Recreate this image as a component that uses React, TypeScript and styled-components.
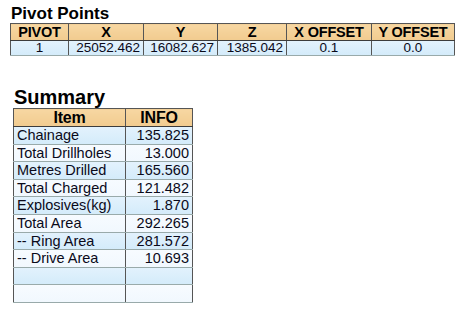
import React, { FC } from 'react';
import styled, { createGlobalStyle } from 'styled-components';

const GlobalStyle = createGlobalStyle`
  body {
    margin: 0;
    background: #ffffff;
    font-family: 'Liberation Sans', Arial, sans-serif;
    color: #000;
  }
`;

const Page = styled.div`
  width: 459px;
  height: 317px;
  padding: 4px 0 0 10px;
  box-sizing: border-box;
  display: flex;
  flex-direction: column;
`;

const Section = styled.section<{ $indent?: number; $gap?: number }>`
  margin-left: ${(p) => p.$indent ?? 0}px;
  margin-top: ${(p) => p.$gap ?? 0}px;
`;

const Title = styled.h2<{ $size: number; $h: number }>`
  margin: 0 0 0 1px;
  font-size: ${(p) => p.$size}px;
  font-weight: bold;
  line-height: ${(p) => p.$h}px;
  height: ${(p) => p.$h}px;
  white-space: nowrap;
`;

const Grid = styled.table`
  border-collapse: collapse;
  table-layout: fixed;
  border: 1px solid #3c3c3c;
`;

const HeadCell = styled.th<{ $w: number; $size: number; $h: number }>`
  width: ${(p) => p.$w}px;
  height: ${(p) => p.$h}px;
  padding: 0 2px;
  border: 1px solid #555;
  border-bottom-color: #3c3c3c;
  background: linear-gradient(#f7d7a2, #f1cb8f);
  font-weight: bold;
  font-size: ${(p) => p.$size}px;
  line-height: ${(p) => p.$h}px;
  text-align: center;
  white-space: nowrap;
  letter-spacing: -0.2px;
`;

const Row = styled.tr<{ $alt?: boolean }>`
  background: ${(p) =>
    p.$alt
      ? 'linear-gradient(#f7fbff, #f1f8fe)'
      : 'linear-gradient(#e3f2fd, #d3ebfa)'};
`;

const Cell = styled.td<{ $align?: 'left' | 'right' | 'center'; $h: number; $size: number }>`
  height: ${(p) => p.$h}px;
  padding: 0 3px;
  border: 1px solid #555;
  border-top-color: #9aa;
  border-bottom-color: #9aa;
  text-align: ${(p) => p.$align ?? 'left'};
  font-size: ${(p) => p.$size}px;
  line-height: ${(p) => p.$h}px;
  white-space: nowrap;
  color: #0a0a1a;
`;

const pivotCols = [
  { name: 'PIVOT', w: 53 },
  { name: 'X', w: 70 },
  { name: 'Y', w: 69 },
  { name: 'Z', w: 64 },
  { name: 'X OFFSET', w: 80 },
  { name: 'Y OFFSET', w: 78 },
];

const pivotRow = ['1', '25052.462', '16082.627', '1385.042', '0.1', '0.0'];
const pivotAlign: ('center' | 'right')[] = ['center', 'right', 'right', 'right', 'center', 'center'];

const summary: [string, string][] = [
  ['Chainage', '135.825'],
  ['Total Drillholes', '13.000'],
  ['Metres Drilled', '165.560'],
  ['Total Charged', '121.482'],
  ['Explosives(kg)', '1.870'],
  ['Total Area', '292.265'],
  ['-- Ring Area', '281.572'],
  ['-- Drive Area', '10.693'],
  ['', ''],
  ['', ''],
];

const App: FC = () => (
  <>
    <GlobalStyle />
    <Page>
      <Section>
        <Title $size={17} $h={19}>Pivot Points</Title>
        <Grid>
          <thead>
            <tr>
              {pivotCols.map((c) => (
                <HeadCell key={c.name} $w={c.w} $size={14.5} $h={16}>
                  {c.name}
                </HeadCell>
              ))}
            </tr>
          </thead>
          <tbody>
            <Row>
              {pivotRow.map((v, i) => (
                <Cell key={i} $h={14} $size={13.5} $align={pivotAlign[i]}>
                  {v}
                </Cell>
              ))}
            </Row>
          </tbody>
        </Grid>
      </Section>

      <Section $indent={3} $gap={31}>
        <Title $size={20} $h={21}>Summary</Title>
        <Grid>
          <thead>
            <tr>
              <HeadCell $w={107} $size={16} $h={17}>Item</HeadCell>
              <HeadCell $w={62} $size={16} $h={17}>INFO</HeadCell>
            </tr>
          </thead>
          <tbody>
            {summary.map(([k, v], i) => (
              <Row key={i} $alt={i % 2 === 1}>
                <Cell $h={16.6} $size={14.5}>{k}</Cell>
                <Cell $h={16.6} $size={14.5} $align="right">
                  {v}
                </Cell>
              </Row>
            ))}
          </tbody>
        </Grid>
      </Section>
    </Page>
  </>
);

export default App;
